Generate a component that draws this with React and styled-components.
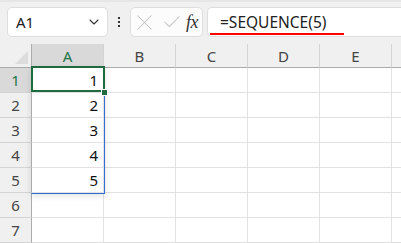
import styled, { createGlobalStyle } from "styled-components"
import { ChevronDown, X, Check } from "lucide-react"

const GlobalStyle = createGlobalStyle`
    body {
        margin: 0;
        background: #f0f0f0;
        font-family: "Noto Sans", "Open Sans", sans-serif;
    }
`

const Page = styled.div`
    width: 401px;
    height: 243px;
    overflow: hidden;
    background: #f0f0f0;
    border-top: 2px solid #e6e6e6;
    box-sizing: border-box;
`

const FormulaBar = styled.div`
    display: flex;
    align-items: center;
    height: 42px;
    padding: 5px 0 7px 7px;
    box-sizing: border-box;
    overflow: hidden;
`

const Box = styled.div`
    height: 30px;
    box-sizing: border-box;
    background: #fff;
    border: 1px solid #dedede;
    border-radius: 5px;
    display: flex;
    align-items: center;
    flex-shrink: 0;
`

const NameBox = styled(Box)`
    width: 101px;
    padding: 0 5px 0 8px;
    justify-content: space-between;
    font-size: 15px;
    color: #222;
`

const Dots = styled.div`
    width: 22px;
    flex-shrink: 0;
    display: flex;
    flex-direction: column;
    align-items: center;
    gap: 2px;

    & span {
        width: 2px;
        height: 2px;
        background: #333;
    }
`

const ButtonBox = styled(Box)`
    width: 73px;
    padding: 0 4px 0 0;
    justify-content: space-between;
    background: #fcfcfc;
`

const Fx = styled.span`
    font-family: "Liberation Serif", serif;
    font-style: italic;
    font-size: 18px;
    color: #333;
    letter-spacing: -0.5px;
`

const FormulaInput = styled(Box)`
    margin-left: 4px;
    width: 220px;
    border-right: none;
    border-radius: 5px 0 0 5px;
    position: relative;
    padding-left: 12px;
    font-size: 15.5px;
    color: #222;
`

const Squiggle = styled.div`
    position: absolute;
    left: 2px;
    top: 25px;
    width: 134px;
    height: 2px;
    background: #ff0000;
`

const Sheet = styled.div`
    position: relative;
    display: grid;
    grid-template-columns: 32px repeat(6, 72px);
    grid-template-rows: 24px repeat(7, 25px);
`

const Corner = styled.div`
    background: #f0f0f0;
    border-right: 1px solid #ababab;
    border-bottom: 1px solid #ababab;
    position: relative;

    &::after {
        content: "";
        position: absolute;
        right: 3px;
        bottom: 3px;
        border-style: solid;
        border-width: 0 0 13px 13px;
        border-color: transparent transparent #dcdcdc transparent;
    }
`

const ColHead = styled.div`
    background: ${p => (p.$active ? "#d9d9d9" : "#f0f0f0")};
    color: ${p => (p.$active ? "#217346" : "#444")};
    border-right: 1px solid #d4d4d4;
    border-bottom: 1px solid #ababab;
    display: flex;
    align-items: center;
    justify-content: center;
    font-size: 15px;
`

const RowHead = styled.div`
    background: ${p => (p.$active ? "#d9d9d9" : "#f0f0f0")};
    color: ${p => (p.$active ? "#217346" : "#444")};
    border-right: 1px solid #ababab;
    border-bottom: 1px solid #d4d4d4;
    display: flex;
    align-items: center;
    justify-content: center;
    font-size: 15px;
`

const Cell = styled.div`
    background: #fff;
    border-right: 1px solid #e1e1e1;
    border-bottom: 1px solid #e1e1e1;
    display: flex;
    align-items: center;
    justify-content: flex-end;
    padding-right: 5px;
    font-size: 15px;
    color: #111;
`

const Range = styled.div`
    position: absolute;
    left: 31px;
    top: 23px;
    width: 72px;
    height: 125px;
    border: 1px solid #2e6fd3;
    border-left-color: transparent;
    box-shadow: 0 2px 6px rgba(0, 0, 0, 0.12);
    pointer-events: none;
`

const Active = styled.div`
    position: absolute;
    left: 31px;
    top: 22px;
    width: 70px;
    height: 22px;
    border: 2px solid #1e6b3f;
    pointer-events: none;
`

const Handle = styled.div`
    position: absolute;
    left: 101px;
    top: 45px;
    width: 5px;
    height: 5px;
    background: #1e6b3f;
    border: 1px solid #fff;
`

const cols = ["A", "B", "C", "D", "E", ""]
const rows = [1, 2, 3, 4, 5, 6, 7]

export default function App() {
    return (
        <Page>
            <GlobalStyle />
            <FormulaBar>
                <NameBox>
                    <span>A1</span>
                    <ChevronDown size={16} strokeWidth={1.6} color="#333" />
                </NameBox>
                <Dots><span /><span /><span /></Dots>
                <ButtonBox>
                    <X size={27} strokeWidth={0.9} color="#c4c4c4" />
                    <Check size={22} strokeWidth={1.1} color="#c4c4c4" />
                    <Fx>fx</Fx>
                </ButtonBox>
                <FormulaInput>
                    =SEQUENCE(5)
                    <Squiggle />
                </FormulaInput>
            </FormulaBar>
            <Sheet>
                <Corner />
                {cols.map((c, i) => (
                    <ColHead key={i} $active={c === "A"}>{c}</ColHead>
                ))}
                {rows.map(r => [
                    <RowHead key={"h" + r} $active={r === 1}>{r}</RowHead>,
                    ...cols.map((c, i) => (
                        <Cell key={r + "-" + i}>{i === 0 && r <= 5 ? r : ""}</Cell>
                    )),
                ])}
                <Range />
                <Active />
                <Handle />
            </Sheet>
        </Page>
    )
}
